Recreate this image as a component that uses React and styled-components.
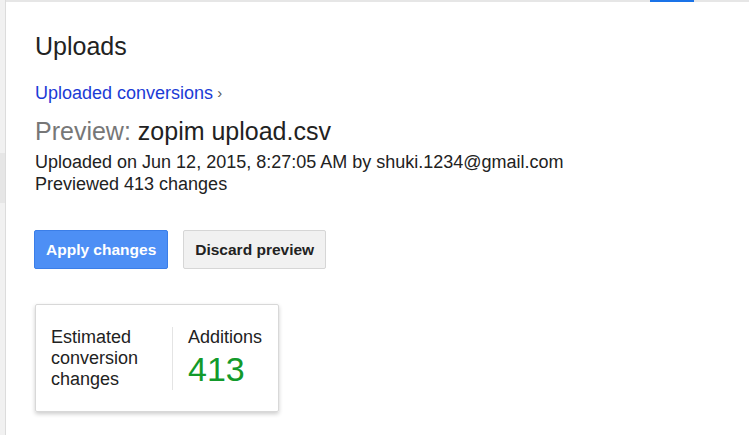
import React from "react";
import styled, { createGlobalStyle } from "styled-components";

const Global = createGlobalStyle`
  html, body { margin: 0; padding: 0; background: #fff; }
  body { font-family: "Liberation Sans", Arial, sans-serif; color: #222; }
`;

const Shell = styled.div`
  display: flex;
  width: 749px;
  height: 435px;
  overflow: hidden;
`;

const SideRail = styled.div`
  width: 5px;
  flex: none;
  background: #f1f1f1;
  border-right: 1px solid #dcdcdc;
  display: flex;
  flex-direction: column;
  padding-top: 153px;
`;

const RailMark = styled.div`
  height: 50px;
  background: #e6e6e6;
`;

const Main = styled.div`
  flex: 1;
  display: flex;
  flex-direction: column;
`;

const TopBar = styled.div`
  height: 2px;
  background: #e6e6e6;
  display: flex;
  padding-left: 644px;
`;

const TopAccent = styled.div`
  width: 44px;
  height: 2px;
  background: #1a73e8;
`;

const Content = styled.div`
  padding: 29px 0 0 29px;
  display: flex;
  flex-direction: column;
  align-items: flex-start;
`;

const Title = styled.h1`
  margin: 0;
  font-size: 25px;
  font-weight: normal;
  color: #222;
  line-height: 30px;
`;

const Breadcrumb = styled.a`
  margin-top: 22px;
  font-size: 18px;
  color: #1c3bd6;
  text-decoration: none;
  line-height: 20px;
  display: flex;
  align-items: center;
  gap: 4px;
`;

const Chevron = styled.span`
  color: #555;
  font-size: 15px;
`;

const FileTitle = styled.h2`
  margin: 13px 0 0;
  font-size: 25px;
  font-weight: normal;
  line-height: 30px;
  color: #222;
`;

const Muted = styled.span`
  color: #777;
`;

const Meta = styled.div`
  margin-top: 5px;
  font-size: 18px;
  line-height: 22px;
  color: #222;
`;

const Actions = styled.div`
  display: flex;
  gap: 15px;
  margin: 35px 0 0 -1px;
`;

const Button = styled.button`
  height: 39px;
  padding: 0 11px;
  border-radius: 2px;
  font-family: "Liberation Sans", Arial, sans-serif;
  font-weight: bold;
  font-size: 15.5px;
  cursor: pointer;
  border: 1px solid ${(p) => (p.$primary ? "#3b7ee8" : "#d6d6d6")};
  background: ${(p) => (p.$primary ? "#4d8ff5" : "#f1f1f1")};
  color: ${(p) => (p.$primary ? "#fff" : "#222")};
`;

const Card = styled.div`
  margin-top: 35px;
  width: 244px;
  box-sizing: border-box;
  border: 1px solid #d8d8d8;
  border-radius: 2px;
  box-shadow: 0 2px 4px rgba(0, 0, 0, 0.2);
  display: flex;
  padding: 22px 0 21px;
`;

const CardLabel = styled.div`
  width: 137px;
  box-sizing: border-box;
  padding: 0 0 0 15px;
  font-size: 18px;
  line-height: 21px;
  color: #222;
  border-right: 1px solid #e4e4e4;
`;

const Stat = styled.div`
  padding-left: 15px;
  display: flex;
  flex-direction: column;
`;

const StatLabel = styled.div`
  font-size: 18px;
  line-height: 21px;
  color: #222;
`;

const StatValue = styled.div`
  font-size: 34px;
  line-height: 42px;
  color: #139a2b;
`;

export default function App() {
  return (
    <>
      <Global />
      <Shell>
        <SideRail>
          <RailMark />
        </SideRail>
        <Main>
          <TopBar>
            <TopAccent />
          </TopBar>
          <Content>
            <Title>Uploads</Title>
            <Breadcrumb href="#">
              Uploaded conversions<Chevron>›</Chevron>
            </Breadcrumb>
            <FileTitle>
              <Muted>Preview:</Muted> zopim upload.csv
            </FileTitle>
            <Meta>
              Uploaded on Jun 12, 2015, 8:27:05 AM by shuki.1234@gmail.com
              <br />
              Previewed 413 changes
            </Meta>
            <Actions>
              <Button $primary>Apply changes</Button>
              <Button>Discard preview</Button>
            </Actions>
            <Card>
              <CardLabel>
                Estimated
                <br />
                conversion
                <br />
                changes
              </CardLabel>
              <Stat>
                <StatLabel>Additions</StatLabel>
                <StatValue>413</StatValue>
              </Stat>
            </Card>
          </Content>
        </Main>
      </Shell>
    </>
  );
}
